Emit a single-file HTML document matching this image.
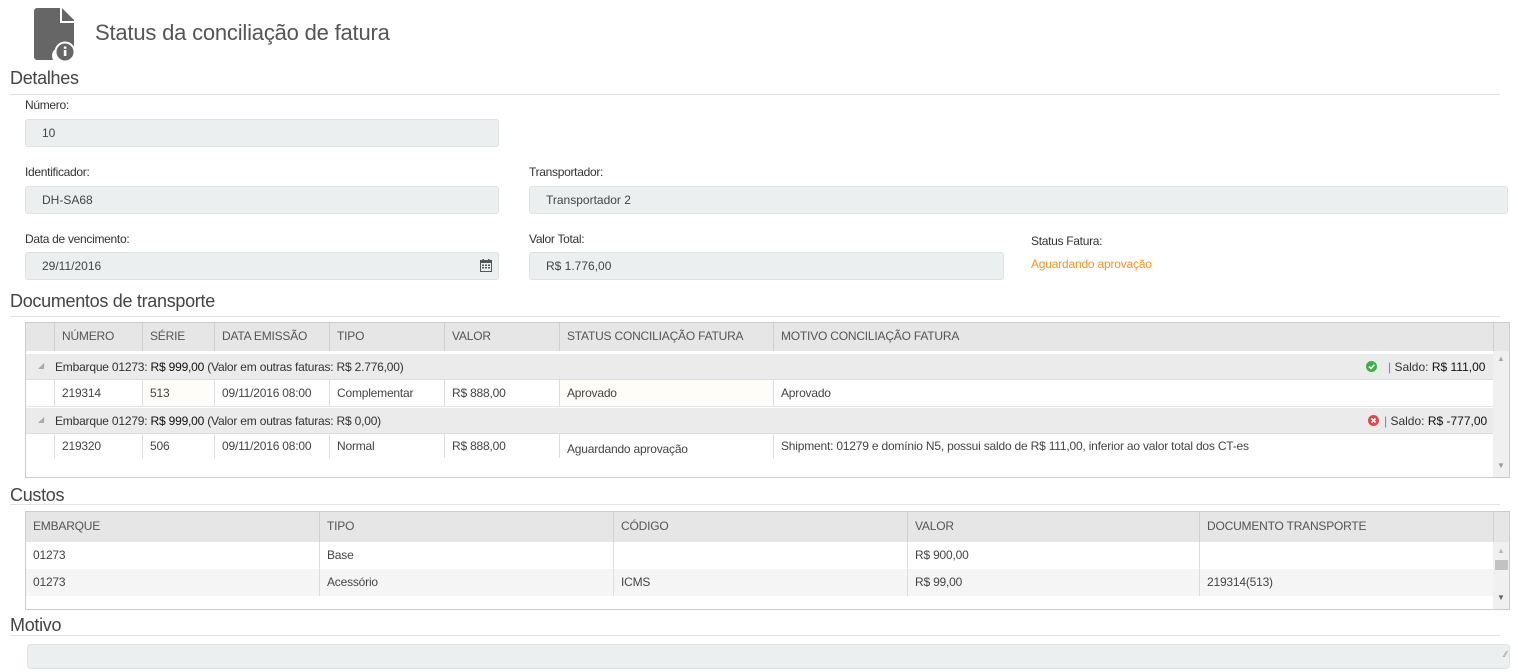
<!DOCTYPE html>
<html><head><meta charset="utf-8"><style>
*{box-sizing:border-box;margin:0;padding:0}
body{width:1518px;height:672px;overflow:hidden;background:#fff;font-family:"Liberation Sans",sans-serif;color:#333;position:relative;font-size:12px}
.a{position:absolute;white-space:nowrap}
.h{font-size:18px;color:#444;letter-spacing:-0.3px}
.hr{position:absolute;left:10px;width:1490px;height:1px;background:#e3e3e3}
.lbl{font-size:12px;color:#333;letter-spacing:-0.3px}
.inp{position:absolute;height:28px;background:#eceff0;border:1px solid #dde2e4;border-radius:3px;padding-left:16px;line-height:26px;font-size:12px;color:#444}
.grid{position:absolute;border:1px solid #ccc;background:#fff;overflow:hidden}
.row{position:absolute;left:0;height:27px}
.c{position:absolute;top:0;height:100%;padding-left:7px;line-height:26px;font-size:12px;color:#444;border-left:1px solid #ddd;white-space:nowrap;letter-spacing:-0.2px}
.hd .c{color:#555;border-left:1px solid #d0d0d0}
</style></head><body>
<svg class="a" style="left:34px;top:8px" width="42" height="54" viewBox="0 0 42 54">
<path d="M3 0H26V15H40V42H20A10 10 0 0 0 19 52H3A3 3 0 0 1 0 49V3A3 3 0 0 1 3 0Z" fill="#666"/>
<path d="M28 0L40 12V13H28Z" fill="#666"/>
<circle cx="31" cy="44" r="9.5" fill="#666" stroke="#fff" stroke-width="2"/>
<rect x="29.8" y="42" width="2.6" height="6" fill="#fff"/><rect x="29.8" y="38.5" width="2.6" height="2.3" fill="#fff"/>
</svg>
<div class="a" style="left:95px;top:20px;font-size:22px;color:#555;letter-spacing:-0.2px">Status da conciliação de fatura</div>

<div class="a h" style="left:10px;top:68px">Detalhes</div><div class="hr" style="top:94px"></div>
<div class="a lbl" style="left:25px;top:98px">Número:</div>
<div class="inp" style="left:25px;top:119px;width:474px">10</div>
<div class="a lbl" style="left:25px;top:165px">Identificador:</div>
<div class="inp" style="left:25px;top:186px;width:474px">DH-SA68</div>
<div class="a lbl" style="left:529px;top:165px">Transportador:</div>
<div class="inp" style="left:529px;top:186px;width:979px">Transportador 2</div>
<div class="a lbl" style="left:25px;top:232px">Data de vencimento:</div>
<div class="inp" style="left:25px;top:252px;width:474px">29/11/2016
<svg style="position:absolute;left:454px;top:6px" width="12" height="13" viewBox="0 0 12 13"><rect x="0.5" y="1.5" width="11" height="11" fill="none" stroke="#555"/><rect x="0.5" y="1.5" width="11" height="2.5" fill="#555"/><rect x="2.5" y="0" width="1.5" height="3" fill="#555"/><rect x="8" y="0" width="1.5" height="3" fill="#555"/><g fill="#555"><rect x="2" y="5.5" width="2" height="1.5"/><rect x="5" y="5.5" width="2" height="1.5"/><rect x="8" y="5.5" width="2" height="1.5"/><rect x="2" y="8" width="2" height="1.5"/><rect x="5" y="8" width="2" height="1.5"/><rect x="8" y="8" width="2" height="1.5"/></g></svg></div>
<div class="a lbl" style="left:529px;top:232px">Valor Total:</div>
<div class="inp" style="left:529px;top:252px;width:475px">R$ 1.776,00</div>
<div class="a lbl" style="left:1031px;top:234px">Status Fatura:</div>
<div class="a" style="left:1031px;top:257px;color:#f7941d;letter-spacing:-0.2px">Aguardando aprovação</div>

<div class="a h" style="left:10px;top:291px">Documentos de transporte</div><div class="hr" style="top:316px"></div>
<div class="grid" style="left:25px;top:322px;width:1485px;height:156px">
 <div class="row hd" style="top:0;width:1485px;height:28px;background:#e6e6e6">
  <div class="c" style="left:28px;width:88px;border-left-color:#d0d0d0">NÚMERO</div>
  <div class="c" style="left:116px;width:72px">SÉRIE</div>
  <div class="c" style="left:188px;width:115px">DATA EMISSÃO</div>
  <div class="c" style="left:303px;width:115px">TIPO</div>
  <div class="c" style="left:418px;width:115px">VALOR</div>
  <div class="c" style="left:533px;width:214px">STATUS CONCILIAÇÃO FATURA</div>
  <div class="c" style="left:747px;width:720px">MOTIVO CONCILIAÇÃO FATURA</div>
  <div class="c" style="left:1467px;width:18px"></div>
 </div>
 <div class="row" style="top:31px;width:1467px;height:26px;background:#ebebeb;border-bottom:1px solid #ddd">
  <span class="a" style="left:12px;top:7px;font-size:8px;color:#aaa">◢</span>
  <span class="a" style="left:29px;top:6px;color:#333;letter-spacing:-0.2px">Embarque 01273: <span style="color:#111">R$ 999,00</span> (Valor em outras faturas: R$ 2.776,00)</span>
  <svg class="a" style="left:1340px;top:7px" width="11" height="11"><circle cx="5.5" cy="5.5" r="5.5" fill="#3cb043"/><path d="M3 5.6L5 7.5L8.3 3.8" stroke="#fff" stroke-width="1.6" fill="none"/></svg>
  <span class="a" style="left:1362px;top:6px;color:#333"><span style="color:#4a8fd0">|</span> Saldo: <span style="color:#111">R$ 111,00</span></span>
 </div>
 <div class="row" style="top:57px;width:1467px;border-bottom:1px solid #e5e5e5">
  <div class="c" style="left:28px;width:88px">219314</div><div class="c" style="left:116px;width:72px;background:#fefdf8">513</div>
  <div class="c" style="left:188px;width:115px">09/11/2016 08:00</div><div class="c" style="left:303px;width:115px">Complementar</div>
  <div class="c" style="left:418px;width:115px">R$ 888,00</div><div class="c" style="left:533px;width:214px;background:#fefdf8">Aprovado</div>
  <div class="c" style="left:747px;width:720px">Aprovado</div>
 </div>
 <div class="row" style="top:85px;width:1467px;height:26px;background:#ebebeb;border-bottom:1px solid #ddd">
  <span class="a" style="left:12px;top:7px;font-size:8px;color:#aaa">◢</span>
  <span class="a" style="left:29px;top:6px;color:#333;letter-spacing:-0.2px">Embarque 01279: <span style="color:#111">R$ 999,00</span> (Valor em outras faturas: R$ 0,00)</span>
  <svg class="a" style="left:1342px;top:7px" width="11" height="11"><circle cx="5.5" cy="5.5" r="5.5" fill="#e04848"/><path d="M3.5 3.5L7.5 7.5M7.5 3.5L3.5 7.5" stroke="#fff" stroke-width="1.6"/></svg>
  <span class="a" style="left:1358px;top:6px;color:#333"><span style="color:#4a8fd0">|</span> Saldo: <span style="color:#111">R$ -777,00</span></span>
 </div>
 <div class="row" style="top:111px;width:1467px;height:24px">
  <div class="c" style="left:28px;width:88px;line-height:24px">219320</div><div class="c" style="left:116px;width:72px;line-height:24px">506</div>
  <div class="c" style="left:188px;width:115px;line-height:24px">09/11/2016 08:00</div><div class="c" style="left:303px;width:115px;line-height:24px">Normal</div>
  <div class="c" style="left:418px;width:115px;line-height:24px">R$ 888,00</div><div class="c" style="left:533px;width:214px;line-height:30px">Aguardando aprovação</div>
  <div class="c" style="left:747px;width:720px;line-height:24px">Shipment: 01279 e domínio N5, possui saldo de R$ 111,00, inferior ao valor total dos CT-es</div>
 </div>
 <div class="a" style="left:1467px;top:28px;width:17px;height:127px;background:#f0f0f0"><span class="a" style="left:4px;top:3px;font-size:8px;color:#aaa">▲</span><span class="a" style="left:4px;top:110px;font-size:8px;color:#999">▼</span></div>
</div>

<div class="a h" style="left:10px;top:485px">Custos</div><div class="hr" style="top:504px"></div>
<div class="grid" style="left:25px;top:511px;width:1485px;height:99px">
 <div class="row hd" style="top:0;width:1485px;height:30px;background:#e6e6e6">
  <div class="c" style="left:0;width:293px;border-left:none;line-height:28px">EMBARQUE</div>
  <div class="c" style="left:293px;width:294px;line-height:28px">TIPO</div>
  <div class="c" style="left:587px;width:294px;line-height:28px">CÓDIGO</div>
  <div class="c" style="left:881px;width:292px;line-height:28px">VALOR</div>
  <div class="c" style="left:1173px;width:294px;line-height:28px">DOCUMENTO TRANSPORTE</div>
  <div class="c" style="left:1467px;width:18px"></div>
 </div>
 <div class="row" style="top:30px;width:1467px">
  <div class="c" style="left:0;width:293px;border-left:none">01273</div><div class="c" style="left:293px;width:294px">Base</div>
  <div class="c" style="left:587px;width:294px"></div><div class="c" style="left:881px;width:292px">R$ 900,00</div><div class="c" style="left:1173px;width:294px"></div>
 </div>
 <div class="row" style="top:57px;width:1467px;background:#f5f5f5">
  <div class="c" style="left:0;width:293px;border-left:none">01273</div><div class="c" style="left:293px;width:294px">Acessório</div>
  <div class="c" style="left:587px;width:294px">ICMS</div><div class="c" style="left:881px;width:292px">R$ 99,00</div><div class="c" style="left:1173px;width:294px">219314(513)</div>
 </div>
 <div class="a" style="left:1467px;top:30px;width:17px;height:68px;background:#f0f0f0"><span class="a" style="left:4px;top:4px;font-size:8px;color:#bbb">▲</span><div class="a" style="left:2px;top:18px;width:13px;height:10px;background:#c2c2c2"></div><span class="a" style="left:4px;top:51px;font-size:8px;color:#666">▼</span></div>
</div>

<div class="a h" style="left:10px;top:615px">Motivo</div><div class="hr" style="top:635px"></div>
<div class="inp" style="left:27px;top:644px;width:1483px;height:25px;border-radius:4px"><span class="a" style="right:2px;bottom:0;font-size:8px;color:#888">⁄⁄</span></div>
</body></html>
